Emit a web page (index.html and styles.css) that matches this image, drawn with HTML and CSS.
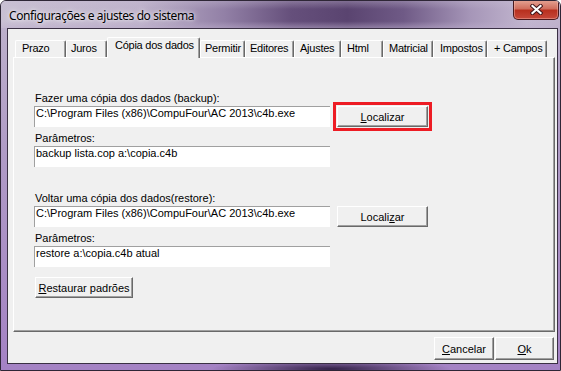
FILE: index.html
```html
<!DOCTYPE html>
<html lang="pt">
<head>
    <meta charset="UTF-8">
    <title>Configurações e ajustes do sistema</title>
    <link rel="stylesheet" href="styles.css">
</head>
<body>
    <div class="window">
        <div class="titlebar">
            <span class="title">Configurações e ajustes do sistema</span>
            <button class="close" title="Fechar">
                <svg width="13" height="11" viewBox="0 0 13 11">
                    <path d="M2.5 2 L10.5 9 M10.5 2 L2.5 9" stroke="#40161a" stroke-width="4.2" stroke-linecap="square"/>
                    <path d="M2.5 2 L10.5 9 M10.5 2 L2.5 9" stroke="#fff" stroke-width="2.2" stroke-linecap="square"/>
                </svg>
            </button>
        </div>
        <div class="frame">
            <div class="client">
                <div class="tabs">
                    <div class="tab">Prazo</div>
                    <div class="tab">Juros</div>
                    <div class="tab active">Cópia dos dados</div>
                    <div class="tab">Permitir</div>
                    <div class="tab">Editores</div>
                    <div class="tab">Ajustes</div>
                    <div class="tab">Html</div>
                    <div class="tab">Matricial</div>
                    <div class="tab">Impostos</div>
                    <div class="tab">+ Campos</div>
                </div>
                <div class="page">
                    <div class="group">
                        <div class="label">Fazer uma cópia dos dados (backup):</div>
                        <div class="row">
                            <div class="field">C:\Program Files (x86)\CompuFour\AC 2013\c4b.exe</div>
                            <button class="btn browse highlight"><u>L</u>ocalizar</button>
                        </div>
                        <div class="label sub">Parâmetros:</div>
                        <div class="field">backup lista.cop a:\copia.c4b</div>
                    </div>
                    <div class="group second">
                        <div class="label">Voltar uma cópia dos dados(restore):</div>
                        <div class="row">
                            <div class="field">C:\Program Files (x86)\CompuFour\AC 2013\c4b.exe</div>
                            <button class="btn browse">Locali<u>z</u>ar</button>
                        </div>
                        <div class="label sub">Parâmetros:</div>
                        <div class="field">restore a:\copia.c4b atual</div>
                    </div>
                    <button class="btn restore"><u>R</u>estaurar padrões</button>
                </div>
                <div class="footer">
                    <button class="btn cancel"><u>C</u>ancelar</button>
                    <button class="btn ok"><u>O</u>k</button>
                </div>
            </div>
        </div>
    </div>
</body>
</html>
```

FILE: styles.css
```css
* {
    box-sizing: border-box;
}
body {
    margin: 0;
    font-family: "Liberation Sans", Arial, sans-serif;
    font-size: 11px;
    color: #000;
    background: #fff;
}
.window {
    width: 561px;
    height: 371px;
    display: flex;
    flex-direction: column;
    border: 1px solid #2e2636;
    border-radius: 6px 6px 0 0;
    overflow: hidden;
    background:
        radial-gradient(ellipse 120px 10px at 330px 368px, rgba(45, 28, 65, 0.95), rgba(45, 28, 65, 0)),
        linear-gradient(to bottom, #bfb4cc, #b09cc6 40%, #a482c4);
}
.titlebar {
    height: 27px;
    display: flex;
    justify-content: space-between;
    align-items: flex-start;
    padding-left: 8px;
    background:
        linear-gradient(to bottom, rgba(200, 190, 212, 0.35), rgba(200, 190, 212, 0) 30%, rgba(200, 190, 212, 0) 75%, rgba(190, 175, 205, 0.5)),
        linear-gradient(to right, #c9c0d3 0, #bdb1ca 25%, #9280a6 40%, #654f7b 52%, #5a4470 62%, #6f5a86 72%, #a696b8 84%, #c2b6cf 94%, #bfb2cc 100%);
}
.title {
    font-family: "Noto Sans", "Open Sans", sans-serif;
    font-size: 12px;
    line-height: 16px;
    margin-top: 7px;
    letter-spacing: -0.4px;
    text-shadow: 0 0 6px rgba(255, 255, 255, 0.9), 0 0 3px rgba(255, 255, 255, 0.7);
}
.close {
    width: 46px;
    height: 20px;
    margin: -1px 1px 0 0;
    padding: 0;
    display: flex;
    align-items: center;
    justify-content: center;
    border: 1px solid #4a1a1e;
    border-top: none;
    border-radius: 0 0 5px 5px;
    background: linear-gradient(to bottom, #e6a596, #d16f5e 45%, #b8301f 55%, #c6483a);
    box-shadow: inset 0 0 0 1px rgba(255, 200, 190, 0.4);
}
.frame {
    flex: 1;
    padding: 0 2px 6px 6px;
    display: flex;
}
.client {
    flex: 1;
    display: flex;
    flex-direction: column;
    border: 1px solid #3a3044;
    background: #f0f0f0;
    padding: 8px 2px 0 5px;
}
.tabs {
    height: 20px;
    display: flex;
    align-items: flex-end;
    padding-left: 2px;
    position: relative;
    z-index: 1;
}
.tab {
    height: 17px;
    padding: 1px 0 0 5px;
    line-height: 13px;
    letter-spacing: -0.25px;
    white-space: nowrap;
    overflow: hidden;
    border-top: 1px solid #fff;
    border-left: 1px solid #fff;
    border-right: 1px solid #696969;
    border-radius: 2px 2px 0 0;
    box-shadow: inset -1px 0 #a0a0a0;
    background: #f0f0f0;
}
.tab.active {
    height: 21px;
    margin-bottom: -1px;
    padding-left: 7px;
}
.tab:nth-child(1) { width: 51px; padding-left: 6px; }
.tab:nth-child(2) { width: 41px; padding-left: 4px; }
.tab:nth-child(3) { width: 93px; }
.tab:nth-child(4) { width: 45px; padding-left: 4px; }
.tab:nth-child(5) { width: 49px; padding-left: 4px; }
.tab:nth-child(6) { width: 47px; }
.tab:nth-child(7) { width: 42px; }
.tab:nth-child(8) { width: 50px; padding-left: 5px; }
.tab:nth-child(9) { width: 54px; padding-left: 6px; }
.tab:nth-child(10) { width: 60px; padding-left: 6px; }
.page {
    height: 275px;
    border: 1px solid;
    border-color: #fff #696969 #696969 #fff;
    box-shadow: inset -1px -1px #a0a0a0;
    padding: 34px 0 0 20px;
    display: flex;
    flex-direction: column;
    align-items: flex-start;
}
.group.second {
    margin-top: 25px;
}
.label {
    line-height: 13px;
    height: 13px;
    margin-bottom: 1px;
    padding-left: 1px;
}
.label.sub {
    margin-top: 5px;
}
.row {
    display: flex;
    gap: 7px;
}
.field {
    width: 296px;
    height: 21px;
    background: #fff;
    border-top: 1px solid #a0a0a0;
    border-left: 1px solid #a0a0a0;
    padding: 0 1px;
    line-height: 13px;
    white-space: nowrap;
}
.btn {
    font: inherit;
    color: #000;
    height: 21px;
    padding: 0;
    background: #f0f0f0;
    border: 1px solid;
    border-color: #fff #696969 #696969 #fff;
    box-shadow: inset -1px -1px #a0a0a0;
}
.btn u {
    text-decoration-thickness: 1px;
    text-underline-offset: 1px;
}
.browse {
    width: 91px;
}
.highlight {
    outline: 3px solid #ed1c24;
    outline-offset: 1px;
}
.restore {
    width: 98px;
    margin: 10px 0 0 1px;
}
.footer {
    display: flex;
    justify-content: flex-end;
    gap: 1px;
    margin-top: 5px;
    padding-right: 1px;
}
.footer .btn {
    height: 23px;
}
.cancel {
    width: 60px;
}
.ok {
    width: 59px;
}
```
